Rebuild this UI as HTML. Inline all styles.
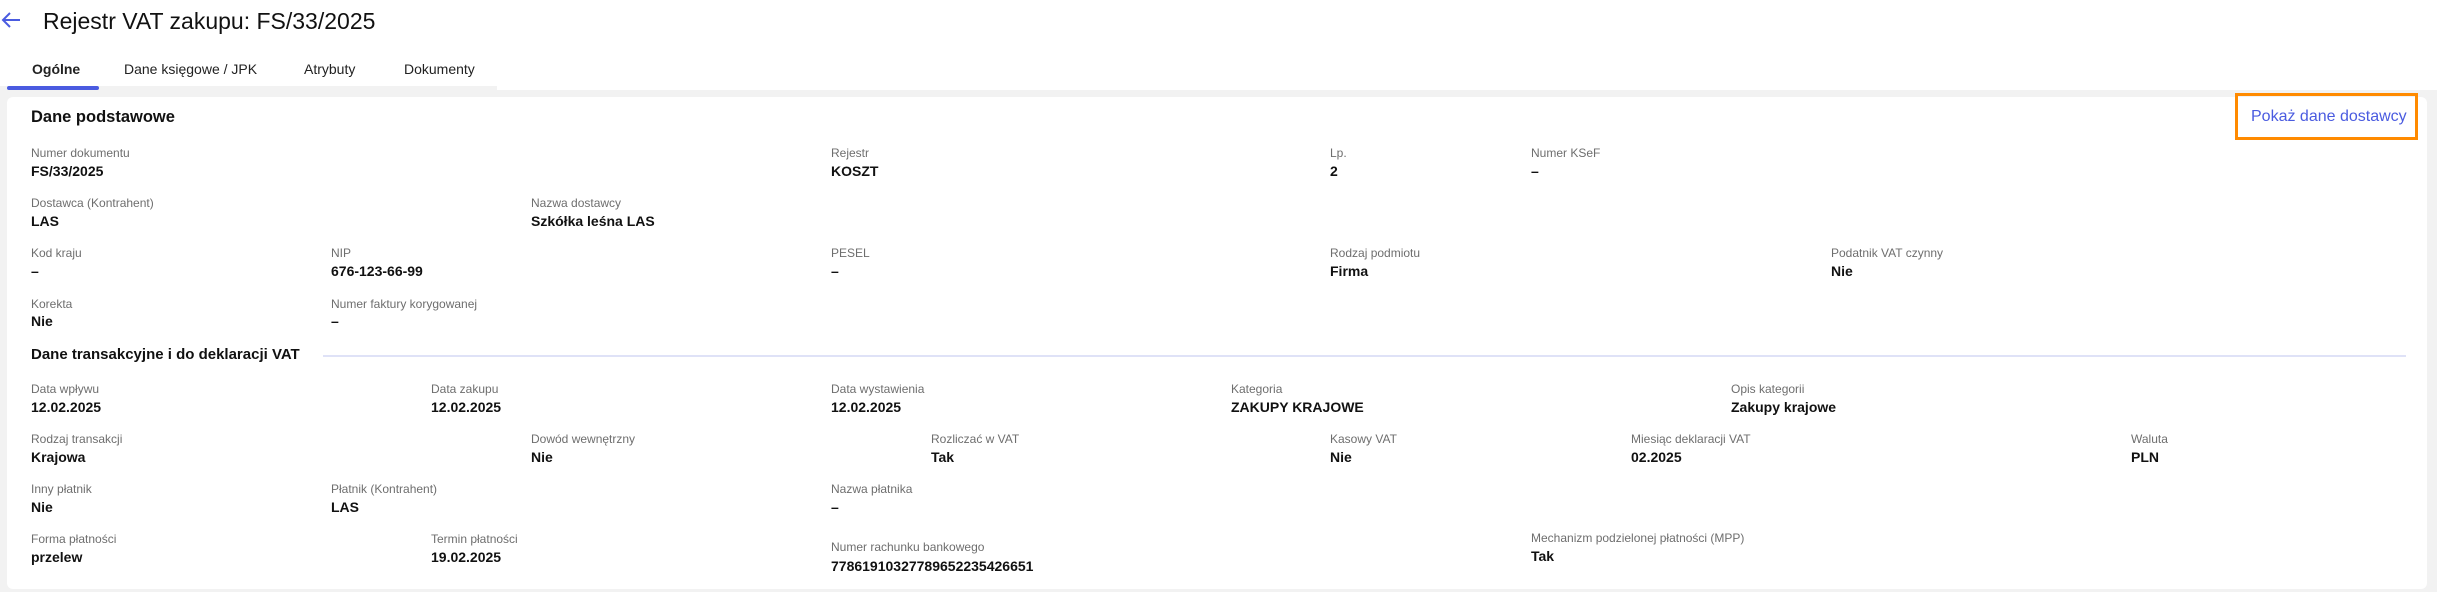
<!DOCTYPE html>
<html><head><meta charset="utf-8"><style>
*{margin:0;padding:0;box-sizing:border-box}
body{width:2437px;height:592px;position:relative;background:#fff;font-family:"Liberation Sans",Arial,sans-serif;overflow:hidden}
.a{position:absolute;white-space:nowrap;height:20px;line-height:20px}
.l{font-size:12px;color:#6e6e6e}
.v{font-size:14px;color:#111;font-weight:bold}
.t{font-size:14px;color:#222}
</style></head><body>
<svg style="position:absolute;left:1px;top:11px" width="20" height="18" viewBox="0 0 20 18"><path d="M19 9H3M9 2L2 9l7 7" fill="none" stroke="#4a5be0" stroke-width="2"/></svg>
<div class="a" style="left:43px;top:6px;height:30px;line-height:30px;font-size:23px;color:#111">Rejestr VAT zakupu: FS/33/2025</div>
<div class="a t" style="left:32px;top:59px;font-weight:bold">Ogólne</div>
<div class="a t" style="left:124px;top:59px">Dane księgowe / JPK</div>
<div class="a t" style="left:304px;top:59px">Atrybuty</div>
<div class="a t" style="left:404px;top:59px">Dokumenty</div>
<div style="position:absolute;left:0;top:90px;width:2437px;height:502px;background:#f2f2f2"></div>
<div style="position:absolute;left:0;top:86px;width:497px;height:4px;background:#f2f2f2"></div>
<div style="position:absolute;left:7px;top:86px;width:92px;height:4px;background:#4a5be0;border-radius:2px"></div>
<div style="position:absolute;left:7px;top:97px;width:2420px;height:492px;background:#fff;border-radius:6px"></div>
<div class="a" style="left:31px;top:106px;height:22px;line-height:22px;font-size:16.5px;font-weight:bold;color:#111">Dane podstawowe</div>
<div style="position:absolute;left:2235px;top:93px;width:183px;height:47px;border:3px solid #ff8a00"></div>
<div class="a" style="left:2251px;top:106px;height:22px;line-height:22px;font-size:16px;color:#4a5be0">Pokaż dane dostawcy</div>

<div class="a l" style="left:31px;top:143px">Numer dokumentu</div><div class="a v" style="left:31px;top:161px">FS/33/2025</div>
<div class="a l" style="left:831px;top:143px">Rejestr</div><div class="a v" style="left:831px;top:161px">KOSZT</div>
<div class="a l" style="left:1330px;top:143px">Lp.</div><div class="a v" style="left:1330px;top:161px">2</div>
<div class="a l" style="left:1531px;top:143px">Numer KSeF</div><div class="a v" style="left:1531px;top:161px">–</div>

<div class="a l" style="left:31px;top:193px">Dostawca (Kontrahent)</div><div class="a v" style="left:31px;top:211px">LAS</div>
<div class="a l" style="left:531px;top:193px">Nazwa dostawcy</div><div class="a v" style="left:531px;top:211px">Szkółka leśna LAS</div>

<div class="a l" style="left:31px;top:243px">Kod kraju</div><div class="a v" style="left:31px;top:261px">–</div>
<div class="a l" style="left:331px;top:243px">NIP</div><div class="a v" style="left:331px;top:261px">676-123-66-99</div>
<div class="a l" style="left:831px;top:243px">PESEL</div><div class="a v" style="left:831px;top:261px">–</div>
<div class="a l" style="left:1330px;top:243px">Rodzaj podmiotu</div><div class="a v" style="left:1330px;top:261px">Firma</div>
<div class="a l" style="left:1831px;top:243px">Podatnik VAT czynny</div><div class="a v" style="left:1831px;top:261px">Nie</div>

<div class="a l" style="left:31px;top:294px">Korekta</div><div class="a v" style="left:31px;top:311px">Nie</div>
<div class="a l" style="left:331px;top:294px">Numer faktury korygowanej</div><div class="a v" style="left:331px;top:311px">–</div>

<div class="a" style="left:31px;top:344px;height:22px;line-height:22px;font-size:15px;font-weight:bold;color:#111">Dane transakcyjne i do deklaracji VAT</div>
<div style="position:absolute;left:323px;top:355px;width:2083px;height:2px;background:#dfe2f7"></div>

<div class="a l" style="left:31px;top:379px">Data wpływu</div><div class="a v" style="left:31px;top:397px">12.02.2025</div>
<div class="a l" style="left:431px;top:379px">Data zakupu</div><div class="a v" style="left:431px;top:397px">12.02.2025</div>
<div class="a l" style="left:831px;top:379px">Data wystawienia</div><div class="a v" style="left:831px;top:397px">12.02.2025</div>
<div class="a l" style="left:1231px;top:379px">Kategoria</div><div class="a v" style="left:1231px;top:397px">ZAKUPY KRAJOWE</div>
<div class="a l" style="left:1731px;top:379px">Opis kategorii</div><div class="a v" style="left:1731px;top:397px">Zakupy krajowe</div>

<div class="a l" style="left:31px;top:429px">Rodzaj transakcji</div><div class="a v" style="left:31px;top:447px">Krajowa</div>
<div class="a l" style="left:531px;top:429px">Dowód wewnętrzny</div><div class="a v" style="left:531px;top:447px">Nie</div>
<div class="a l" style="left:931px;top:429px">Rozliczać w VAT</div><div class="a v" style="left:931px;top:447px">Tak</div>
<div class="a l" style="left:1330px;top:429px">Kasowy VAT</div><div class="a v" style="left:1330px;top:447px">Nie</div>
<div class="a l" style="left:1631px;top:429px">Miesiąc deklaracji VAT</div><div class="a v" style="left:1631px;top:447px">02.2025</div>
<div class="a l" style="left:2131px;top:429px">Waluta</div><div class="a v" style="left:2131px;top:447px">PLN</div>

<div class="a l" style="left:31px;top:479px">Inny płatnik</div><div class="a v" style="left:31px;top:497px">Nie</div>
<div class="a l" style="left:331px;top:479px">Płatnik (Kontrahent)</div><div class="a v" style="left:331px;top:497px">LAS</div>
<div class="a l" style="left:831px;top:479px">Nazwa płatnika</div><div class="a v" style="left:831px;top:497px">–</div>

<div class="a l" style="left:31px;top:529px">Forma płatności</div><div class="a v" style="left:31px;top:547px">przelew</div>
<div class="a l" style="left:431px;top:529px">Termin płatności</div><div class="a v" style="left:431px;top:547px">19.02.2025</div>
<div class="a l" style="left:831px;top:537px">Numer rachunku bankowego</div><div class="a v" style="left:831px;top:556px">77861910327789652235426651</div>
<div class="a l" style="left:1531px;top:528px">Mechanizm podzielonej płatności (MPP)</div><div class="a v" style="left:1531px;top:546px">Tak</div>
</body></html>
